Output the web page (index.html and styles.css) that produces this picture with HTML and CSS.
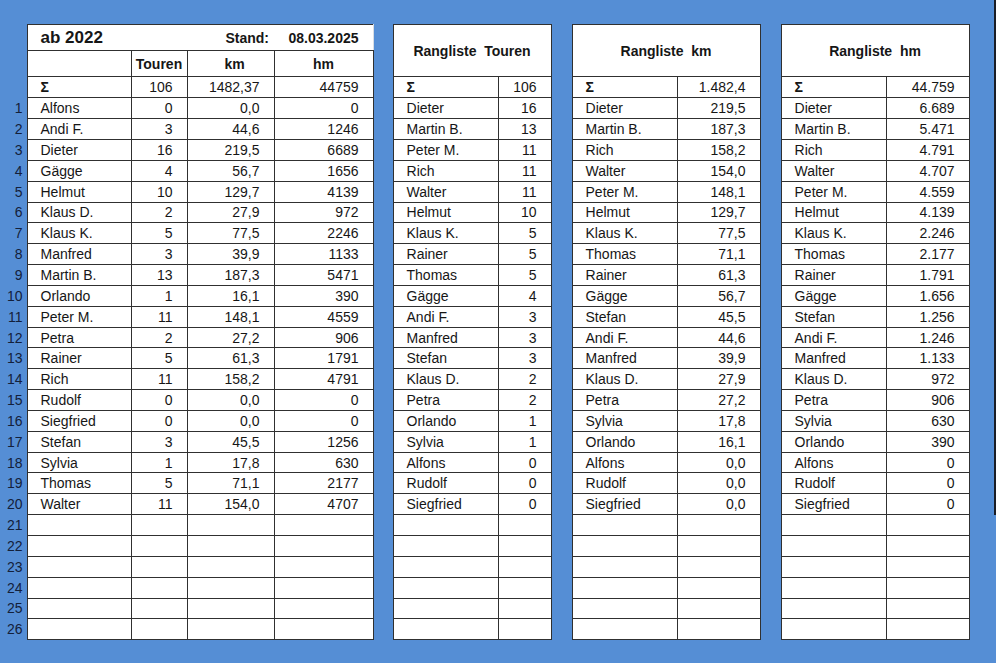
FILE: index.html
```html
<!DOCTYPE html>
<html lang="de">
<head>
<meta charset="utf-8">
<title>Touren ab 2022</title>
<link rel="stylesheet" href="styles.css">
</head>
<body>
<div class="sheet">
  <table class="main">
    <colgroup><col class="c-num"><col class="c-name"><col class="c-t"><col class="c-km"><col class="c-hm"></colgroup>
    <tr class="r-title">
      <td class="n"></td>
      <td class="title" colspan="2">ab 2022</td>
      <td class="stand">Stand:</td>
      <td class="date">08.03.2025</td>
    </tr>
    <tr class="r-head">
      <td class="n"></td>
      <td></td>
      <td class="h">Touren</td>
      <td class="h h-km">km</td>
      <td class="h">hm</td>
    </tr>
    <tr class="r-sum"><td class="n"></td><td class="sig">Σ</td><td class="v">106</td><td class="v">1482,37</td><td class="v">44759</td></tr>
    <tr><td class="n">1</td><td>Alfons</td><td class="v">0</td><td class="v">0,0</td><td class="v">0</td></tr>
    <tr><td class="n">2</td><td>Andi F.</td><td class="v">3</td><td class="v">44,6</td><td class="v">1246</td></tr>
    <tr><td class="n">3</td><td>Dieter</td><td class="v">16</td><td class="v">219,5</td><td class="v">6689</td></tr>
    <tr><td class="n">4</td><td>Gägge</td><td class="v">4</td><td class="v">56,7</td><td class="v">1656</td></tr>
    <tr><td class="n">5</td><td>Helmut</td><td class="v">10</td><td class="v">129,7</td><td class="v">4139</td></tr>
    <tr><td class="n">6</td><td>Klaus D.</td><td class="v">2</td><td class="v">27,9</td><td class="v">972</td></tr>
    <tr><td class="n">7</td><td>Klaus K.</td><td class="v">5</td><td class="v">77,5</td><td class="v">2246</td></tr>
    <tr><td class="n">8</td><td>Manfred</td><td class="v">3</td><td class="v">39,9</td><td class="v">1133</td></tr>
    <tr><td class="n">9</td><td>Martin B.</td><td class="v">13</td><td class="v">187,3</td><td class="v">5471</td></tr>
    <tr><td class="n">10</td><td>Orlando</td><td class="v">1</td><td class="v">16,1</td><td class="v">390</td></tr>
    <tr><td class="n">11</td><td>Peter M.</td><td class="v">11</td><td class="v">148,1</td><td class="v">4559</td></tr>
    <tr><td class="n">12</td><td>Petra</td><td class="v">2</td><td class="v">27,2</td><td class="v">906</td></tr>
    <tr><td class="n">13</td><td>Rainer</td><td class="v">5</td><td class="v">61,3</td><td class="v">1791</td></tr>
    <tr><td class="n">14</td><td>Rich</td><td class="v">11</td><td class="v">158,2</td><td class="v">4791</td></tr>
    <tr><td class="n">15</td><td>Rudolf</td><td class="v">0</td><td class="v">0,0</td><td class="v">0</td></tr>
    <tr><td class="n">16</td><td>Siegfried</td><td class="v">0</td><td class="v">0,0</td><td class="v">0</td></tr>
    <tr><td class="n">17</td><td>Stefan</td><td class="v">3</td><td class="v">45,5</td><td class="v">1256</td></tr>
    <tr><td class="n">18</td><td>Sylvia</td><td class="v">1</td><td class="v">17,8</td><td class="v">630</td></tr>
    <tr><td class="n">19</td><td>Thomas</td><td class="v">5</td><td class="v">71,1</td><td class="v">2177</td></tr>
    <tr><td class="n">20</td><td>Walter</td><td class="v">11</td><td class="v">154,0</td><td class="v">4707</td></tr>
    <tr><td class="n">21</td><td></td><td></td><td></td><td></td></tr>
    <tr><td class="n">22</td><td></td><td></td><td></td><td></td></tr>
    <tr><td class="n">23</td><td></td><td></td><td></td><td></td></tr>
    <tr><td class="n">24</td><td></td><td></td><td></td><td></td></tr>
    <tr><td class="n">25</td><td></td><td></td><td></td><td></td></tr>
    <tr><td class="n">26</td><td></td><td></td><td></td><td></td></tr>
  </table>

  <table class="rank rank-t">
    <colgroup><col class="c-rname"><col class="c-rt"></colgroup>
    <tr class="r-rtitle"><td class="rtitle" colspan="2">Rangliste&nbsp; Touren</td></tr>
    <tr class="r-sum"><td class="sig">Σ</td><td class="v">106</td></tr>
    <tr><td>Dieter</td><td class="v">16</td></tr>
    <tr><td>Martin B.</td><td class="v">13</td></tr>
    <tr><td>Peter M.</td><td class="v">11</td></tr>
    <tr><td>Rich</td><td class="v">11</td></tr>
    <tr><td>Walter</td><td class="v">11</td></tr>
    <tr><td>Helmut</td><td class="v">10</td></tr>
    <tr><td>Klaus K.</td><td class="v">5</td></tr>
    <tr><td>Rainer</td><td class="v">5</td></tr>
    <tr><td>Thomas</td><td class="v">5</td></tr>
    <tr><td>Gägge</td><td class="v">4</td></tr>
    <tr><td>Andi F.</td><td class="v">3</td></tr>
    <tr><td>Manfred</td><td class="v">3</td></tr>
    <tr><td>Stefan</td><td class="v">3</td></tr>
    <tr><td>Klaus D.</td><td class="v">2</td></tr>
    <tr><td>Petra</td><td class="v">2</td></tr>
    <tr><td>Orlando</td><td class="v">1</td></tr>
    <tr><td>Sylvia</td><td class="v">1</td></tr>
    <tr><td>Alfons</td><td class="v">0</td></tr>
    <tr><td>Rudolf</td><td class="v">0</td></tr>
    <tr><td>Siegfried</td><td class="v">0</td></tr>
    <tr><td></td><td></td></tr>
    <tr><td></td><td></td></tr>
    <tr><td></td><td></td></tr>
    <tr><td></td><td></td></tr>
    <tr><td></td><td></td></tr>
    <tr><td></td><td></td></tr>
  </table>

  <table class="rank rank-km">
    <colgroup><col class="c-rname"><col class="c-rv"></colgroup>
    <tr class="r-rtitle"><td class="rtitle" colspan="2">Rangliste&nbsp; km</td></tr>
    <tr class="r-sum"><td class="sig">Σ</td><td class="v">1.482,4</td></tr>
    <tr><td>Dieter</td><td class="v">219,5</td></tr>
    <tr><td>Martin B.</td><td class="v">187,3</td></tr>
    <tr><td>Rich</td><td class="v">158,2</td></tr>
    <tr><td>Walter</td><td class="v">154,0</td></tr>
    <tr><td>Peter M.</td><td class="v">148,1</td></tr>
    <tr><td>Helmut</td><td class="v">129,7</td></tr>
    <tr><td>Klaus K.</td><td class="v">77,5</td></tr>
    <tr><td>Thomas</td><td class="v">71,1</td></tr>
    <tr><td>Rainer</td><td class="v">61,3</td></tr>
    <tr><td>Gägge</td><td class="v">56,7</td></tr>
    <tr><td>Stefan</td><td class="v">45,5</td></tr>
    <tr><td>Andi F.</td><td class="v">44,6</td></tr>
    <tr><td>Manfred</td><td class="v">39,9</td></tr>
    <tr><td>Klaus D.</td><td class="v">27,9</td></tr>
    <tr><td>Petra</td><td class="v">27,2</td></tr>
    <tr><td>Sylvia</td><td class="v">17,8</td></tr>
    <tr><td>Orlando</td><td class="v">16,1</td></tr>
    <tr><td>Alfons</td><td class="v">0,0</td></tr>
    <tr><td>Rudolf</td><td class="v">0,0</td></tr>
    <tr><td>Siegfried</td><td class="v">0,0</td></tr>
    <tr><td></td><td></td></tr>
    <tr><td></td><td></td></tr>
    <tr><td></td><td></td></tr>
    <tr><td></td><td></td></tr>
    <tr><td></td><td></td></tr>
    <tr><td></td><td></td></tr>
  </table>

  <table class="rank rank-hm">
    <colgroup><col class="c-rname"><col class="c-rv2"></colgroup>
    <tr class="r-rtitle"><td class="rtitle" colspan="2">Rangliste&nbsp; hm</td></tr>
    <tr class="r-sum"><td class="sig">Σ</td><td class="v">44.759</td></tr>
    <tr><td>Dieter</td><td class="v">6.689</td></tr>
    <tr><td>Martin B.</td><td class="v">5.471</td></tr>
    <tr><td>Rich</td><td class="v">4.791</td></tr>
    <tr><td>Walter</td><td class="v">4.707</td></tr>
    <tr><td>Peter M.</td><td class="v">4.559</td></tr>
    <tr><td>Helmut</td><td class="v">4.139</td></tr>
    <tr><td>Klaus K.</td><td class="v">2.246</td></tr>
    <tr><td>Thomas</td><td class="v">2.177</td></tr>
    <tr><td>Rainer</td><td class="v">1.791</td></tr>
    <tr><td>Gägge</td><td class="v">1.656</td></tr>
    <tr><td>Stefan</td><td class="v">1.256</td></tr>
    <tr><td>Andi F.</td><td class="v">1.246</td></tr>
    <tr><td>Manfred</td><td class="v">1.133</td></tr>
    <tr><td>Klaus D.</td><td class="v">972</td></tr>
    <tr><td>Petra</td><td class="v">906</td></tr>
    <tr><td>Sylvia</td><td class="v">630</td></tr>
    <tr><td>Orlando</td><td class="v">390</td></tr>
    <tr><td>Alfons</td><td class="v">0</td></tr>
    <tr><td>Rudolf</td><td class="v">0</td></tr>
    <tr><td>Siegfried</td><td class="v">0</td></tr>
    <tr><td></td><td></td></tr>
    <tr><td></td><td></td></tr>
    <tr><td></td><td></td></tr>
    <tr><td></td><td></td></tr>
    <tr><td></td><td></td></tr>
    <tr><td></td><td></td></tr>
  </table>
</div>
<div class="edge"></div>
</body>
</html>
```
FILE: styles.css
```css
html, body {
  margin: 0;
  padding: 0;
}
body {
  background: #558ed5;
  font-family: "Liberation Sans", Arial, sans-serif;
  font-size: 14px;
  color: #161616;
  width: 996px;
  height: 663px;
  overflow: hidden;
  position: relative;
}
.sheet {
  display: flex;
  align-items: flex-start;
  padding-top: 24px;
}
table {
  border-collapse: collapse;
  table-layout: fixed;
}
td {
  border: 1px solid #303030;
  background: #fff;
  padding: 0 14px 0 13px;
  height: 19.85px;
  line-height: 16px;
  white-space: nowrap;
  overflow: hidden;
  vertical-align: middle;
}
.r-title td, .r-head td { height: 25px; }
.r-sum td { height: 20.3px; }
.r-rtitle td { height: 51px; }

/* main table */
.main { width: 373px; }
.c-num { width: 27px; }
.c-name { width: 104px; }
.c-t { width: 56px; }
.c-km { width: 87px; }
.c-hm { width: 99px; }

td.n {
  border: none;
  background: transparent;
  text-align: right;
  padding: 0 4px 0 0;
  color: #13203a;
}
.title {
  font-weight: bold;
  font-size: 17px;
  border-right: none;
}
.stand {
  font-weight: bold;
  text-align: right;
  padding-right: 5px;
  border-left: none;
  border-right: none;
}
.date {
  font-weight: bold;
  text-align: right;
  border-left: none;
  border-right: 1px solid #d8dde4;
}
.h {
  font-weight: bold;
  text-align: center;
  padding: 0;
}
.h-km { padding-left: 8px; }
.sig { font-weight: bold; }
.v { text-align: right; }

/* rank tables */
.rank-t { margin-left: 19px; width: 158px; }
.rank-km { margin-left: 20px; width: 188px; }
.rank-hm { margin-left: 20px; width: 188px; }
.c-rname { width: 105px; }
.c-rt { width: 53px; }
.c-rv { width: 83px; }
.c-rv2 { width: 83px; }
.rtitle {
  font-weight: bold;
  text-align: center;
  padding: 0;
}

.edge {
  position: absolute;
  right: 0;
  top: 0;
  width: 2px;
  height: 515px;
  background: #1a1d26;
}
```
